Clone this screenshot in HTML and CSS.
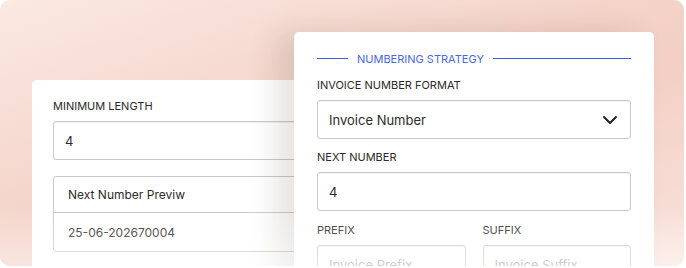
FILE: index.html
```html
<!DOCTYPE html>
<html lang="en">
<head>
    <meta charset="UTF-8">
    <meta name="viewport" content="width=device-width, initial-scale=1.0">
    <title>Invoice Numbering</title>
    <link rel="stylesheet" href="styles.css">
</head>
<body>

    <div class="frame">
        <div class="card card-left">
            <label class="field-label">Minimum Length</label>
            <div class="input">4</div>

            <div class="preview">
                <div class="preview-head">Next Number Previw</div>
                <div class="preview-value">25-06-202670004</div>
            </div>
        </div>

        <div class="card card-right">
            <div class="legend">
                <span class="legend-line short"></span>
                <span class="legend-text">Numbering Strategy</span>
                <span class="legend-line"></span>
            </div>

            <label class="field-label">Invoice Number Format</label>
            <div class="input select">
                <span>Invoice Number</span>
                <svg width="16" height="10" viewBox="0 0 16 10">
                    <polyline points="2,2 8,8 14,2" fill="none" stroke="#222" stroke-width="2" stroke-linecap="round" stroke-linejoin="round"/>
                </svg>
            </div>

            <label class="field-label">Next Number</label>
            <div class="input">4</div>

            <div class="row">
                <div class="col">
                    <label class="field-label">Prefix</label>
                    <div class="input placeholder">Invoice Prefix</div>
                </div>
                <div class="col">
                    <label class="field-label">Suffix</label>
                    <div class="input placeholder">Invoice Suffix</div>
                </div>
            </div>
        </div>

        <div class="fade"></div>
    </div>

</body>
</html>
```

FILE: styles.css
```css
body {
    margin: 0;
    background: #fff;
    font-family: Inter, "Noto Sans", sans-serif;
    color: #2b2b2b;
}
.frame {
    position: relative;
    width: 684px;
    height: 266px;
    border-radius: 10px;
    overflow: hidden;
    background: linear-gradient(160deg, #fbe9e2 0%, #f4d3c9 45%, #f3cfc5 60%, #f9e3dc 100%);
}
.fade {
    position: absolute;
    left: 0;
    right: 0;
    bottom: 0;
    height: 60px;
    background: linear-gradient(to bottom, rgba(255,255,255,0), rgba(255,255,255,0.45));
    pointer-events: none;
}
.card {
    background: #fff;
    border-radius: 5px;
    box-sizing: border-box;
}
.card-left {
    margin-left: 32px;
    margin-top: 80px;
    width: 330px;
    height: 220px;
    padding: 19px 21px;
}
.card-right {
    position: absolute;
    left: 294px;
    top: 32px;
    width: 360px;
    height: 260px;
    padding: 18px 23px;
    box-shadow: -18px 0 28px rgba(60, 30, 20, 0.12);
}
.field-label {
    display: block;
    font-size: 11px;
    line-height: 14px;
    text-transform: uppercase;
    color: #2a2a2a;
    margin-bottom: 8px;
}
.input {
    box-sizing: border-box;
    height: 39px;
    border: 1px solid #c9c9c9;
    border-radius: 3px;
    box-shadow: inset 0 1px 1px rgba(0,0,0,0.06);
    padding: 0 11px;
    display: flex;
    align-items: center;
    font-size: 13px;
    color: #2b2b2b;
    margin-bottom: 12px;
}
.card-left .input {
    margin-bottom: 16px;
}
.select {
    justify-content: space-between;
    padding-right: 12px;
    margin-bottom: 11px;
}
.placeholder {
    color: #a8a8a8;
}
.preview {
    border: 1px solid #c9c9c9;
    border-radius: 3px;
    font-size: 12px;
}
.preview-head {
    height: 35px;
    display: flex;
    align-items: center;
    padding-left: 14px;
    border-bottom: 1px solid #c9c9c9;
}
.preview-value {
    height: 38px;
    display: flex;
    align-items: center;
    padding-left: 14px;
}
.legend {
    display: flex;
    align-items: center;
    gap: 9px;
    height: 17px;
    margin-bottom: 11px;
}
.legend-line {
    flex: 1;
    height: 1px;
    background: #3d5ee8;
}
.legend-line.short {
    flex: 0 0 31px;
}
.legend-text {
    font-size: 11px;
    text-transform: uppercase;
    color: #4a67e6;
}
.row {
    display: flex;
    gap: 17px;
}
.col {
    flex: 1;
}
```
